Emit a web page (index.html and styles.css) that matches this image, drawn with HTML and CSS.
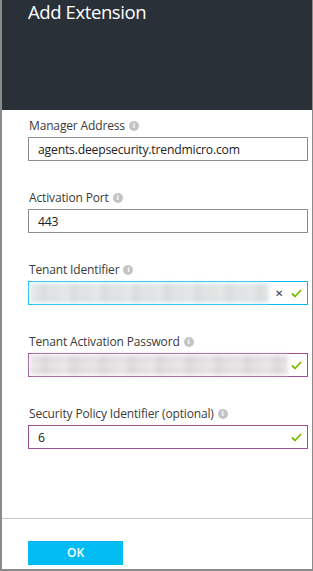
FILE: index.html
```html
<!DOCTYPE html>
<html lang="en">
<head>
  <meta charset="UTF-8" />
  <title>Add Extension</title>
  <link rel="stylesheet" href="styles.css">
</head>
<body>
  <div class="blade">
    <div class="blade-header">
      <div class="blade-title">Add Extension</div>
    </div>

    <div class="blade-body">
      <div class="field">
        <div class="label">Manager Address <span class="info">i</span></div>
        <div class="input">
          <span class="value">agents.deepsecurity.trendmicro.com</span>
        </div>
      </div>

      <div class="field">
        <div class="label">Activation Port <span class="info">i</span></div>
        <div class="input">
          <span class="value">443</span>
        </div>
      </div>

      <div class="field">
        <div class="label">Tenant Identifier <span class="info">i</span></div>
        <div class="input focused">
          <div class="blurred blue"></div>
          <span class="clear">&#x2715;</span>
          <svg class="check" width="11" height="9" viewBox="0 0 11 9"><path d="M1 4.5 L4 7.5 L10 1" fill="none" stroke="#7fba00" stroke-width="1.8"/></svg>
        </div>
      </div>

      <div class="field">
        <div class="label">Tenant Activation Password <span class="info">i</span></div>
        <div class="input dirty">
          <div class="blurred pink"></div>
          <svg class="check" width="11" height="9" viewBox="0 0 11 9"><path d="M1 4.5 L4 7.5 L10 1" fill="none" stroke="#7fba00" stroke-width="1.8"/></svg>
        </div>
      </div>

      <div class="field">
        <div class="label">Security Policy Identifier (optional) <span class="info">i</span></div>
        <div class="input dirty">
          <span class="value">6</span>
          <svg class="check" width="11" height="9" viewBox="0 0 11 9"><path d="M1 4.5 L4 7.5 L10 1" fill="none" stroke="#7fba00" stroke-width="1.8"/></svg>
        </div>
      </div>
    </div>

    <div class="blade-footer">
      <button class="ok-button">OK</button>
    </div>
  </div>
</body>
</html>
```

FILE: styles.css
```css
html, body {
  margin: 0;
  padding: 0;
  background: #fff;
}
body {
  font-family: 'Open Sans', 'Noto Sans', sans-serif;
  color: #333;
}
.blade {
  box-sizing: border-box;
  width: 313px;
  height: 571px;
  border-left: 2px solid #8a8a8a;
  border-right: 1px solid #8a8a8a;
  border-bottom: 2px solid #8a8a8a;
  display: flex;
  flex-direction: column;
}
.blade-header {
  height: 110px;
  background-color: #2a3038;
  padding: 0 0 0 26px;
  box-sizing: border-box;
}
.blade-title {
  color: #fff;
  font-size: 18.5px;
  line-height: 26px;
  margin-top: -1px;
  letter-spacing: -0.4px;
}
.blade-body {
  flex: 1;
  padding: 8px 4px 0 26px;
}
.field {
  margin-bottom: 29px;
}
.label {
  font-size: 12px;
  line-height: 16px;
  height: 16px;
  color: #3a3a3a;
  margin-bottom: 3px;
  padding-left: 1px;
  display: flex;
  align-items: center;
  gap: 4px;
  letter-spacing: -0.15px;
}
.info {
  display: inline-block;
  width: 10px;
  height: 10px;
  border-radius: 50%;
  background: #c4c4c4;
  color: #fff;
  font-size: 7px;
  line-height: 10px;
  text-align: center;
  font-weight: 700;
  font-family: 'DejaVu Sans', sans-serif;
}
.input {
  box-sizing: border-box;
  height: 24px;
  border: 1px solid #8e8e8e;
  display: flex;
  align-items: center;
  padding: 0 5px 0 9px;
}
.input.focused {
  border-color: #00bcf2;
  padding-left: 1px;
}
.input.dirty {
  border-color: #9b4f96;
}
.input.dirty .blurred {
  margin-left: -8px;
}
.value {
  flex: 1;
  font-size: 12.2px;
  color: #222;
  letter-spacing: -0.2px;
}
.blurred {
  height: 20px;
  filter: blur(2px);
}
.blurred.blue {
  width: 239px;
  background:
    repeating-linear-gradient(90deg, rgba(255,255,255,0.18) 0 9px, rgba(0,0,0,0.02) 9px 17px, rgba(255,255,255,0.08) 17px 31px),
    linear-gradient(#e3e9ea, #d6dfe1 30%, #e8e5e4 50%, #d6dee0 70%, #e1e7e8);
}
.blurred.pink {
  width: 258px;
  background:
    repeating-linear-gradient(90deg, rgba(255,255,255,0.18) 0 10px, rgba(0,0,0,0.02) 10px 19px, rgba(255,255,255,0.08) 19px 29px),
    linear-gradient(#e6e2e4, #dcd6da 30%, #ebe8e9 50%, #dcd6da 70%, #e5e1e3);
}
.clear {
  font-size: 10px;
  color: #2a3a55;
  margin-left: 6px;
  font-family: 'DejaVu Sans', sans-serif;
}
.check {
  margin-left: auto;
}
.blade-footer {
  border-top: 1px solid #c8c8c8;
  height: 51px;
  padding: 21px 0 0 26px;
  box-sizing: border-box;
}
.ok-button {
  width: 95px;
  height: 24px;
  border: none;
  background: #00bcf2;
  color: #fff;
  font-family: 'Open Sans', sans-serif;
  font-size: 12px;
  font-weight: 600;
  padding: 0;
}
```
